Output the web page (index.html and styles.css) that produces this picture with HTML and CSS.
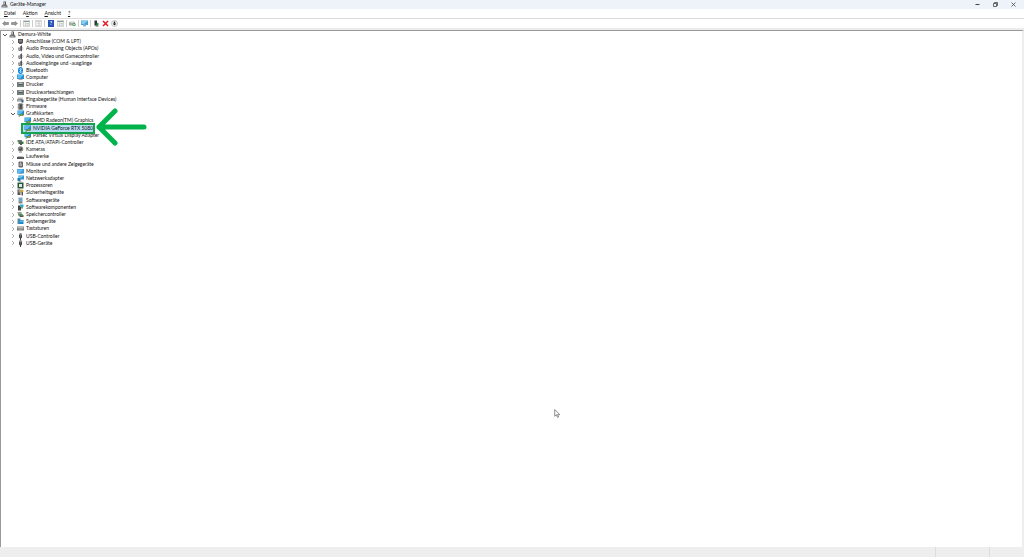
FILE: index.html
```html
<!DOCTYPE html>
<html lang="de">
<head>
    <meta charset="UTF-8">
    <meta name="viewport" content="width=device-width, initial-scale=1.0">
    <title>Geräte-Manager</title>
    <link rel="stylesheet" href="styles.css">
</head>
<body>
    <!-- Symbole -->
    <svg class="sprite" aria-hidden="true">
        <symbol id="open" viewBox="0 0 12 12"><path d="M2 4l4 4 4-4" fill="none" stroke="#444" stroke-width="1.8"/></symbol>
        <symbol id="closed" viewBox="0 0 12 12"><path d="M4 2l4 4-4 4" fill="none" stroke="#999" stroke-width="1.6"/></symbol>
        <symbol id="pc" viewBox="0 0 14 14"><path d="M5 1h5v8H5z" fill="#555"/><path d="M6 2h2v5H6z" fill="#bbb"/><path d="M1 9l3-2h7l2 3v3H1z" fill="#777"/><path d="M3 10h6v1H3z" fill="#ddd"/></symbol>
        <symbol id="port" viewBox="0 0 14 14"><path d="M2 2h10v7l-3 3H5L2 9z" fill="#555"/><path d="M4 4h6v1H4zM4 7h6v1H4z" fill="#aaa"/></symbol>
        <symbol id="speaker" viewBox="0 0 14 14"><path d="M2 5h3l4-4v12L5 9H2z" fill="#999"/><path d="M7 3l3-3v13L7 11z" fill="#555"/><path d="M2 9h3l2 3H4z" fill="#777"/><path d="M11 4q2 3 0 6" fill="none" stroke="#888"/></symbol>
        <symbol id="bluetooth" viewBox="0 0 14 14"><ellipse cx="7" cy="7" rx="5" ry="7" fill="#0a84e0"/><path d="M4.500 4.500l5 5L7 12V2l2.500 2.500-5 5" fill="none" stroke="#fff"/></symbol>
        <symbol id="monitor" viewBox="0 0 14 14"><path d="M0 1h14v9H0z" fill="#278fd0"/><path d="M1 2h12L6 9H1z" fill="#5cbcf0"/><path d="M3 10h8v2H3z" fill="#aaa"/></symbol>
        <symbol id="screen" viewBox="0 0 14 14"><path d="M0 2h14v9H0z" fill="#3a9cdc"/><path d="M1 3h12L5 10H1z" fill="#62bdf0"/><path d="M3 11h8v1H3z" fill="#777"/></symbol>
        <symbol id="printer" viewBox="0 0 14 14"><path d="M0 2h14v10H0z" fill="#777"/><path d="M3 3h8v3H3z" fill="#aebcbc"/><path d="M3 8h8v4H3z" fill="#6d8f80"/><path d="M3 7h8v1H3z" fill="#333"/></symbol>
        <symbol id="hid" viewBox="0 0 14 14"><path d="M1 5h9v6H0z" fill="#888"/><path d="M2 3h10v3H2z" fill="#bbb"/><path d="M2 8h6v1H2z" fill="#ddd"/><path d="M9 7h4v6H9z" fill="#368"/></symbol>
        <symbol id="firmware" viewBox="0 0 14 14"><path d="M3 1h8v12H3z" fill="#444"/><path d="M1 3h12M1 6h12M1 9h12M1 12h12" stroke="#777"/><path d="M5 2h1v10H5z" fill="#888"/></symbol>
        <symbol id="gpu" viewBox="0 0 14 14"><path d="M1 1h13v9H1z" fill="#2685c8"/><path d="M2 2h11L6 9H2z" fill="#5abbea"/><path d="M5 8h8v4H5z" fill="#4a924e"/><path d="M8 9h3v2H8z" fill="#d9a83c"/><path d="M3 11h3v2H3z" fill="#666"/></symbol>
        <symbol id="ide" viewBox="0 0 14 14"><path d="M1 2h9v4H1z" fill="#777"/><path d="M3 5h10v5H3z" fill="#3c7a44"/><path d="M6 7h4v5H6z" fill="#555"/></symbol>
        <symbol id="camera" viewBox="0 0 14 14"><circle cx="7" cy="6" r="5.500" fill="#888"/><circle cx="7" cy="6" r="3" fill="#444"/><circle cx="6" cy="5" r="1" fill="#ccc"/><path d="M4 12h6v1H4z" fill="#777"/></symbol>
        <symbol id="drive" viewBox="0 0 14 14"><path d="M2 6h10l1 2H1z" fill="#bbb"/><path d="M0 8h14v4H0z" fill="#555"/><path d="M10 9h2v1h-2z" fill="#8c8"/></symbol>
        <symbol id="mouse" viewBox="0 0 14 14"><rect x="3" y="1" width="9" height="12" rx="2" fill="#666"/><path d="M5 5h5v5H5z" fill="#aaa"/><path d="M7 1h1v5H7z" fill="#ddd"/></symbol>
        <symbol id="network" viewBox="0 0 14 14"><path d="M3 1h11v8H3z" fill="#2e91d0"/><path d="M4 2h9L6 8H4z" fill="#6bc2ef"/><path d="M1 6h6v6H1z" fill="#287cae"/><path d="M3 12h6v1H3z" fill="#666"/></symbol>
        <symbol id="cpu" viewBox="0 0 14 14"><path d="M1 1h12v12H1z" fill="#28583a"/><path d="M4 4h6v6H4z" fill="#e1e8e1"/></symbol>
        <symbol id="security" viewBox="0 0 14 14"><path d="M1 1h6v11H1z" fill="#555"/><path d="M3 2h3v5H3z" fill="#999"/><circle cx="10" cy="4" r="3" fill="#d8a326"/><path d="M9 6h3v7H9z" fill="#555"/></symbol>
        <symbol id="softdev" viewBox="0 0 14 14"><path d="M3 1h8v12H3z" fill="#999"/><path d="M4 2h6v7H4z" fill="#68a8cf"/><path d="M4 10h6v1H4z" fill="#555"/></symbol>
        <symbol id="softcomp" viewBox="0 0 14 14"><path d="M2 3h6v10H2z" fill="#444"/><path d="M6 1h7v5H6z" fill="#3aa7c7"/><path d="M8 6h4v3H8z" fill="#59a86e"/></symbol>
        <symbol id="storage" viewBox="0 0 14 14"><path d="M1 2h8v3H1z" fill="#999"/><path d="M2 5h8v4H2z" fill="#548958"/><path d="M5 8h8v4H5z" fill="#555"/><circle cx="10" cy="8" r="2" fill="#55a063"/></symbol>
        <symbol id="system" viewBox="0 0 14 14"><path d="M1 1h6v11H1z" fill="#5c8aa5"/><path d="M5 4h8v8H5z" fill="#168ad0"/><path d="M6 5h6v3H6z" fill="#5cb9ed"/></symbol>
        <symbol id="keyboard" viewBox="0 0 14 14"><path d="M0 3h14v8H0z" fill="#777"/><path d="M1 4h12v2H1zM1 7h12v1H1zM3 9h8v1H3z" fill="#bbb"/></symbol>
        <symbol id="usb" viewBox="0 0 14 14"><path d="M5 0h4v3H5z" fill="#888"/><path d="M4 3h6v6l-2 2v3H6v-3L4 9z" fill="#444"/><path d="M6 4h1v4H6z" fill="#999"/></symbol>
        <symbol id="back" viewBox="0 0 14 14"><path d="M1 7l5-4v2h7v4H6v2z" fill="#999" stroke="#666"/></symbol>
        <symbol id="forward" viewBox="0 0 14 14"><path d="M13 7L8 3v2H1v4h7v2z" fill="#999" stroke="#666"/></symbol>
        <symbol id="list" viewBox="0 0 14 14"><path d="M.5 1.500h13v11H.5z" fill="#f5f5f2" stroke="#999"/><path d="M1 2h12v2H1z" fill="#89a"/><path d="M5 5v7M7 7h5M7 10h5" stroke="#8aab8c"/></symbol>
        <symbol id="sheet" viewBox="0 0 14 14"><path d="M1.500 .5h11v13h-11z" fill="#fafafa" stroke="#999"/><path d="M3 3h8M5 6h5M5 8h5M5 11h5" stroke="#9aa8b2"/></symbol>
        <symbol id="scan" viewBox="0 0 14 14"><path d="M0 4h12v7H0z" fill="#aaa"/><path d="M3 2h7v4H3z" fill="#ddd"/><circle cx="10" cy="9" r="3.500" fill="#68aa70"/><path d="M8 9h4" stroke="#fff"/></symbol>
        <symbol id="remote" viewBox="0 0 14 14"><path d="M0 1h14v9H0z" fill="#469fd3"/><path d="M1 2h12L6 8H1z" fill="#8acdf0"/><path d="M4 9h6v4H4z" fill="#8ab4cc"/></symbol>
        <symbol id="enable" viewBox="0 0 14 14"><path d="M3 1h5v10H3z" fill="#333"/><path d="M5 11h6v2H5z" fill="#555"/><path d="M9 5l4 4h-3v3H8V9H6z" fill="#399655"/></symbol>
        <symbol id="remove" viewBox="0 0 14 14"><path d="M2 2l10 10M12 2L2 12" stroke="#e01b24" stroke-width="3"/></symbol>
        <symbol id="down" viewBox="0 0 14 14"><circle cx="7" cy="7" r="6" fill="#fff" stroke="#888"/><path d="M7 3v4" stroke="#222" stroke-width="3"/><path d="M3 7h8l-4 4z" fill="#222"/></symbol>
    </svg>

    <div class="window">
        <header class="titlebar">
            <svg class="icon"><use href="#pc"/></svg>
            <h1>Geräte-Manager</h1>
            <div class="controls">
                <button aria-label="Minimieren"><svg viewBox="0 0 10 10"><path d="M1 5h8" stroke="#444" stroke-width="2"/></svg></button>
                <button aria-label="Verkleinern"><svg viewBox="0 0 10 10"><path d="M1 3h6v6H1zM3 3V1h6v6H7" fill="none" stroke="#444" stroke-width="1.600"/></svg></button>
                <button aria-label="Schließen"><svg viewBox="0 0 10 10"><path d="M1 1l8 8M9 1L1 9" stroke="#444" stroke-width="1.600"/></svg></button>
            </div>
        </header>

        <nav class="menubar">
            <button><u>D</u>atei</button>
            <button>A<u>k</u>tion</button>
            <button><u>A</u>nsicht</button>
            <button><u>?</u></button>
        </nav>

        <div class="toolbar">
            <button aria-label="Zurück"><svg class="icon"><use href="#back"/></svg></button>
            <button aria-label="Vorwärts"><svg class="icon"><use href="#forward"/></svg></button>
            <i class="sep"></i>
            <button aria-label="Konsolenstruktur"><svg class="icon"><use href="#list"/></svg></button>
            <i class="sep"></i>
            <button aria-label="Eigenschaften"><svg class="icon"><use href="#sheet"/></svg></button>
            <i class="sep"></i>
            <button aria-label="Hilfe" class="help">?</button>
            <button aria-label="Aktionsbereich"><svg class="icon"><use href="#list"/></svg></button>
            <i class="sep"></i>
            <button aria-label="Aktualisieren"><svg class="icon"><use href="#scan"/></svg></button>
            <i class="sep"></i>
            <button aria-label="Nach Änderungen suchen"><svg class="icon"><use href="#remote"/></svg></button>
            <i class="sep"></i>
            <button aria-label="Treiber aktualisieren"><svg class="icon"><use href="#enable"/></svg></button>
            <button aria-label="Deinstallieren"><svg class="icon"><use href="#remove"/></svg></button>
            <button aria-label="Deaktivieren"><svg class="icon"><use href="#down"/></svg></button>
        </div>

        <main class="content">
            <ul class="tree">
                <li class="root"><svg class="twisty"><use href="#open"/></svg><svg class="icon"><use href="#pc"/></svg><span>Demura-White</span></li>
                <li><svg class="twisty"><use href="#closed"/></svg><svg class="icon"><use href="#port"/></svg><span>Anschlüsse (COM &amp; LPT)</span></li>
                <li><svg class="twisty"><use href="#closed"/></svg><svg class="icon"><use href="#speaker"/></svg><span>Audio Processing Objects (APOs)</span></li>
                <li><svg class="twisty"><use href="#closed"/></svg><svg class="icon"><use href="#speaker"/></svg><span>Audio, Video und Gamecontroller</span></li>
                <li><svg class="twisty"><use href="#closed"/></svg><svg class="icon"><use href="#speaker"/></svg><span>Audioeingänge und -ausgänge</span></li>
                <li><svg class="twisty"><use href="#closed"/></svg><svg class="icon"><use href="#bluetooth"/></svg><span>Bluetooth</span></li>
                <li><svg class="twisty"><use href="#closed"/></svg><svg class="icon"><use href="#monitor"/></svg><span>Computer</span></li>
                <li><svg class="twisty"><use href="#closed"/></svg><svg class="icon"><use href="#printer"/></svg><span>Drucker</span></li>
                <li><svg class="twisty"><use href="#closed"/></svg><svg class="icon"><use href="#printer"/></svg><span>Druckwarteschlangen</span></li>
                <li><svg class="twisty"><use href="#closed"/></svg><svg class="icon"><use href="#hid"/></svg><span>Eingabegeräte (Human Interface Devices)</span></li>
                <li><svg class="twisty"><use href="#closed"/></svg><svg class="icon"><use href="#firmware"/></svg><span>Firmware</span></li>
                <li><svg class="twisty"><use href="#open"/></svg><svg class="icon"><use href="#gpu"/></svg><span>Grafikkarten</span></li>
                <li class="device"><svg class="icon"><use href="#gpu"/></svg><span>AMD Radeon(TM) Graphics</span></li>
                <li class="device selected">
                    <svg class="icon"><use href="#gpu"/></svg><span>NVIDIA GeForce RTX 5080</span>
                    <svg class="arrow" viewBox="0 0 52 38"><path d="M49 19H4M20 3L4 19l16 16" fill="none" stroke="#00b34b" stroke-width="5" stroke-linecap="round" stroke-linejoin="round"/></svg>
                </li>
                <li class="device"><svg class="icon"><use href="#gpu"/></svg><span>Parsec Virtual Display Adapter</span></li>
                <li><svg class="twisty"><use href="#closed"/></svg><svg class="icon"><use href="#ide"/></svg><span>IDE ATA/ATAPI-Controller</span></li>
                <li><svg class="twisty"><use href="#closed"/></svg><svg class="icon"><use href="#camera"/></svg><span>Kameras</span></li>
                <li><svg class="twisty"><use href="#closed"/></svg><svg class="icon"><use href="#drive"/></svg><span>Laufwerke</span></li>
                <li><svg class="twisty"><use href="#closed"/></svg><svg class="icon"><use href="#mouse"/></svg><span>Mäuse und andere Zeigegeräte</span></li>
                <li><svg class="twisty"><use href="#closed"/></svg><svg class="icon"><use href="#screen"/></svg><span>Monitore</span></li>
                <li><svg class="twisty"><use href="#closed"/></svg><svg class="icon"><use href="#network"/></svg><span>Netzwerkadapter</span></li>
                <li><svg class="twisty"><use href="#closed"/></svg><svg class="icon"><use href="#cpu"/></svg><span>Prozessoren</span></li>
                <li><svg class="twisty"><use href="#closed"/></svg><svg class="icon"><use href="#security"/></svg><span>Sicherheitsgeräte</span></li>
                <li><svg class="twisty"><use href="#closed"/></svg><svg class="icon"><use href="#softdev"/></svg><span>Softwaregeräte</span></li>
                <li><svg class="twisty"><use href="#closed"/></svg><svg class="icon"><use href="#softcomp"/></svg><span>Softwarekomponenten</span></li>
                <li><svg class="twisty"><use href="#closed"/></svg><svg class="icon"><use href="#storage"/></svg><span>Speichercontroller</span></li>
                <li><svg class="twisty"><use href="#closed"/></svg><svg class="icon"><use href="#system"/></svg><span>Systemgeräte</span></li>
                <li><svg class="twisty"><use href="#closed"/></svg><svg class="icon"><use href="#keyboard"/></svg><span>Tastaturen</span></li>
                <li><svg class="twisty"><use href="#closed"/></svg><svg class="icon"><use href="#usb"/></svg><span>USB-Controller</span></li>
                <li><svg class="twisty"><use href="#closed"/></svg><svg class="icon"><use href="#usb"/></svg><span>USB-Geräte</span></li>
            </ul>
        </main>

        <footer class="statusbar"><div></div><div></div><div></div></footer>
    </div>

    <!-- Mauszeiger -->
    <svg class="cursor" viewBox="0 0 10 16"><path d="M1 1v12l3-3 2 5 2-1-2-4h4z" fill="#fff" stroke="#777" stroke-width="1.500"/></svg>
</body>
</html>
```

FILE: styles.css
```css
*{
    margin: 0;
    padding: 0;
    box-sizing: border-box;
}
body{
    color: #111;
    background: #fff;
    font: 5px/7px Lato, "Open Sans", sans-serif;
}
button{
    border: 0;
    background: none;
    color: inherit;
    font: inherit;
}
svg{
    display: block;
    flex: none;
}
.sprite{
    position: absolute;
    width: 0;
    height: 0;
}
.icon{
    width: 7px;
    height: 7px;
}
.window{
    display: flex;
    flex-direction: column;
    height: 100vh;
}
/* Titelleiste */
.titlebar{
    display: flex;
    align-items: center;
    gap: 2px;
    height: 9px;
    padding: 0 7px 0 1px;
    background: #eef3f9;
}
.titlebar h1{
    font-size: 5px;
    font-weight: normal;
}
.controls{
    display: flex;
    gap: 12px;
    margin-left: auto;
}
.controls button{
    width: 6px;
    height: 6px;
}
.controls svg{
    width: 5px;
    height: 5px;
}
.menubar{
    display: flex;
    gap: 7px;
    height: 10px;
    padding: 1px 4px;
    border-bottom: 1px solid #dcdcdc;
}
.menubar u{
    text-underline-offset: 1px;
}
/* Werkzeugleiste */
.toolbar{
    display: flex;
    align-items: center;
    gap: 2px;
    height: 9px;
    margin-bottom: 2px;
    padding: 0 2px;
}
.sep{
    width: 1px;
    height: 7px;
    background: #ccc;
}
.help{
    width: 6px;
    height: 7px;
    margin: 0 1px;
    background: #2855b5;
    color: #fff;
    font-weight: bold;
}
/* Gerätebaum */
.content{
    flex: 1;
    border: 1px solid #999;
    border-width: 1px 2px 0 1px;
    border-right-color: #eee;
    outline: 2px solid #ececec;
}
.tree{
    display: grid;
    grid-auto-rows: 1fr;
    height: 216px;
    list-style: none;
}
.tree li{
    display: flex;
    align-items: center;
    min-height: 0;
    padding-left: 9px;
    white-space: nowrap;
}
.tree .root{
    padding-left: 1px;
}
.tree .device{
    padding-left: 23px;
}
.twisty{
    width: 6px;
    height: 6px;
    margin-right: 1px;
}
.tree .icon{
    margin-right: 2px;
}
.tree .selected{
    position: relative;
    justify-self: start;
}
/* Markierung */
.selected::before{
    content: "";
    position: absolute;
    inset: -2px -2px -2px 20px;
    border: 2px solid #16a34e;
    background: #b9dcf5;
    z-index: 1;
}
.selected .icon,
.selected span{
    position: relative;
    z-index: 2;
}
.arrow{
    position: absolute;
    left: 100%;
    top: 50%;
    width: 52px;
    height: 38px;
    margin: -20px 0 0 2px;
}
.statusbar{
    display: grid;
    grid-template-columns: 1fr 54px 35px;
    height: 10px;
    background: #eee;
}
.statusbar div + div{
    border-left: 1px solid #ddd;
}
.cursor{
    position: absolute;
    left: 554px;
    top: 409px;
    width: 6px;
    height: 9px;
}
```
